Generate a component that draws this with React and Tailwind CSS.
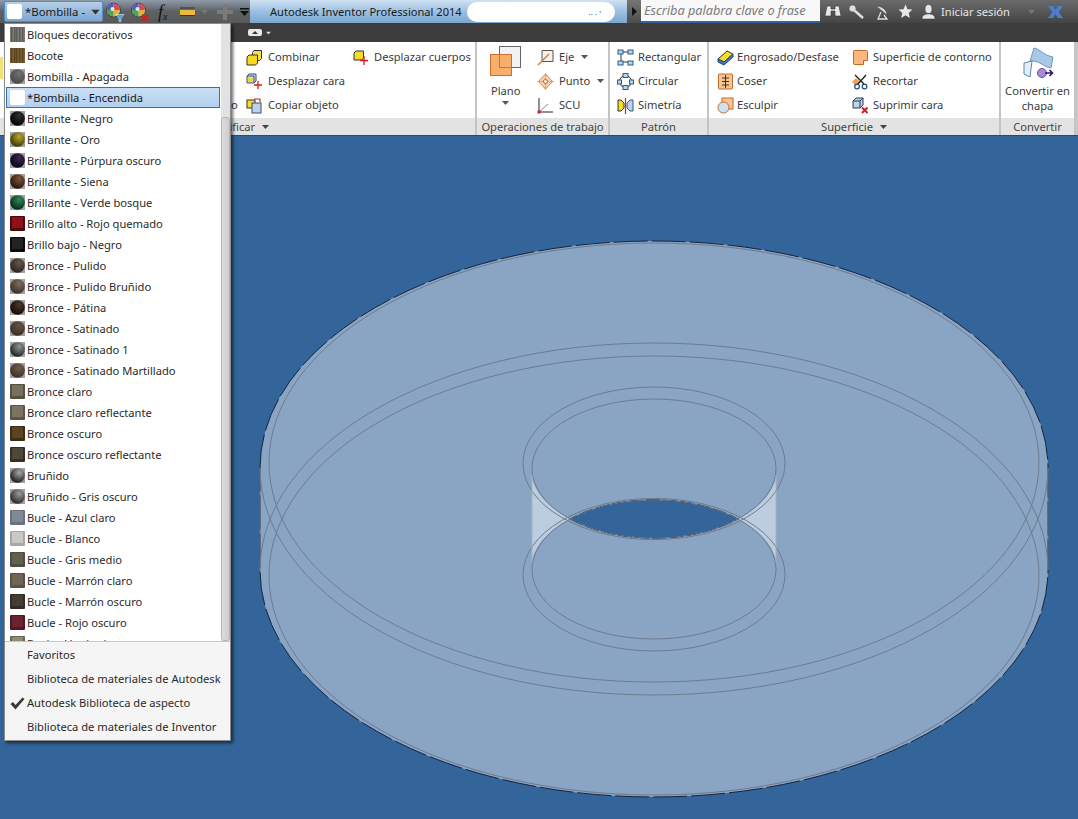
import React from "react";

const materials = [
  ["Bloques decorativos", "t", "#7d7a74", "#4a4845"],
  ["Bocote", "t", "#7a6034", "#43311a"],
  ["Bombilla - Apagada", "s", "#6f6f6f", "#4b4b4b"],
  ["*Bombilla - Encendida", "w", "#ffffff", "#ffffff"],
  ["Brillante - Negro", "s", "#303030", "#020202"],
  ["Brillante - Oro", "s", "#b8a82a", "#3f3706"],
  ["Brillante - Púrpura oscuro", "s", "#3a2a55", "#0a0414"],
  ["Brillante - Siena", "s", "#7d5340", "#2a150c"],
  ["Brillante - Verde bosque", "s", "#35875a", "#052c15"],
  ["Brillo alto - Rojo quemado", "b", "#8e1218", "#4c0a0d"],
  ["Brillo bajo - Negro", "b", "#232323", "#0c0c0c"],
  ["Bronce - Pulido", "s", "#64574c", "#2e2620"],
  ["Bronce - Pulido Bruñido", "s", "#7c6d60", "#3b322a"],
  ["Bronce - Pátina", "s", "#4a372b", "#130a06"],
  ["Bronce - Satinado", "s", "#665345", "#3a2e25"],
  ["Bronce - Satinado 1", "s", "#8f9898", "#1e2424"],
  ["Bronce - Satinado Martillado", "s", "#725e4e", "#3f3026"],
  ["Bronce claro", "b", "#77705f", "#57513f"],
  ["Bronce claro reflectante", "b", "#7b7462", "#5b5545"],
  ["Bronce oscuro", "b", "#5a4520", "#3d2e12"],
  ["Bronce oscuro reflectante", "b", "#50463a", "#362f24"],
  ["Bruñido", "s", "#a8a8a8", "#1e1e1e"],
  ["Bruñido - Gris oscuro", "s", "#9c9c9c", "#2b2b2b"],
  ["Bucle - Azul claro", "b", "#7f8998", "#6a7280"],
  ["Bucle - Blanco", "b", "#c9c9c3", "#a8a8a2"],
  ["Bucle - Gris medio", "b", "#62604f", "#4f4d42"],
  ["Bucle - Marrón claro", "b", "#716655", "#5a5043"],
  ["Bucle - Marrón oscuro", "b", "#443d34", "#312c25"],
  ["Bucle - Rojo oscuro", "b", "#6c2430", "#521822"],
  ["Bucle - Verde claro", "b", "#8d8d72", "#66664f"],
];

function Swatch({ kind, hi, lo, id }) {
  if (kind === "w") {
    return (
      <svg width="15" height="15" className="shrink-0">
        <rect x="0" y="0" width="15" height="15" rx="2" fill="#ffffff" />
      </svg>
    );
  }
  if (kind === "s") {
    return (
      <svg width="15" height="15" className="shrink-0">
        <defs>
          <radialGradient id={"m" + id} cx="0.62" cy="0.3" r="0.7">
            <stop offset="0" stopColor={hi} />
            <stop offset="1" stopColor={lo} />
          </radialGradient>
        </defs>
        <rect width="15" height="15" fill="#a0a0a0" />
        <circle cx="7.5" cy="7.5" r="7.300" fill={"url(#m" + id + ")"} />
      </svg>
    );
  }
  if (kind === "t") {
    return (
      <svg width="15" height="15" className="shrink-0">
        <rect width="15" height="15" fill={hi} />
        {[1, 4, 6, 9, 12].map((x) => (
          <rect key={x} x={x} y="0" width="1.400" height="15" fill={lo} opacity="0.6" />
        ))}
      </svg>
    );
  }
  return (
    <svg width="15" height="15" className="shrink-0">
      <rect width="15" height="15" rx="1" fill={lo} />
      <rect x="2" y="1" width="11" height="11" fill={hi} />
    </svg>
  );
}

const Caret = ({ className = "" }) => (
  <svg width="7" height="4" viewBox="0 0 7 4" className={"shrink-0 " + className}>
    <path d="M0 0h7L3.500 4z" fill="currentColor" />
  </svg>
);

function Wheel({ badge }) {
  return (
    <svg width="19" height="20" viewBox="0 0 19 20">
      <circle cx="7.500" cy="8" r="6.800" fill="#f4f4f4" stroke="#222" strokeWidth="0.8" />
      <path d="M7.500 8V1.500A6.500 6.500 0 0 1 14 8z" fill="#e0484f" />
      <path d="M7.500 8H14A6.500 6.500 0 0 1 7.500 14.500z" fill="#d9b73c" />
      <path d="M7.500 8v6.500A6.500 6.500 0 0 1 1 8z" fill="#4ca35a" />
      <path d="M7.500 8H1A6.500 6.500 0 0 1 7.500 1.500z" fill="#4a5fc8" />
      <circle cx="6.500" cy="7" r="2" fill="#e8e8e8" />
      {badge === "f" ? (
        <path d="M10 12.500h8l-3 3.500v3.500h-2V16z" fill="#35a6e8" stroke="#fff" strokeWidth="0.5" />
      ) : (
        <path d="M11 13l6 6m0-6l-6 6" stroke="#d81c1c" strokeWidth="2.200" />
      )}
    </svg>
  );
}

const Ico = ({ children, w = 17, h = 17 }) => (
  <svg width={w} height={h} viewBox={`0 0 ${w} ${h}`} className="shrink-0">
    {children}
  </svg>
);

const icons = {
  combinar: (
    <Ico>
      <path d="M8 1.500h7.500v8l-2 2H6.500v-8z" fill="#f6e23a" stroke="#333" />
      <path d="M3 6h8.500v8l-2 2H1v-8z" fill="#f8d820" stroke="#333" />
    </Ico>
  ),
  cara: (
    <Ico>
      <path d="M1 3l2-2h7v7l-2 2H1z" fill="#cfe0f2" stroke="#34506e" />
      <path d="M1 3h7v7" fill="none" stroke="#34506e" />
      <path d="M2 5h5v4H2z" fill="#f4d430" />
      <path d="M12 8v8M8 12h8" stroke="#d81c1c" strokeWidth="1.300" />
    </Ico>
  ),
  copiar: (
    <Ico>
      <rect x="1" y="3" width="8" height="8" fill="#f6dc28" stroke="#333" />
      <rect x="6" y="6" width="9" height="10" fill="#bcd3ec" stroke="#34506e" />
      <path d="M8 2h6v3" fill="none" stroke="#d81c1c" strokeWidth="1.200" />
    </Ico>
  ),
  cuerpos: (
    <Ico>
      <path d="M4 2h7.500v7l-2 2H2V4z" fill="#f6dc28" stroke="#333" />
      <path d="M12 7v9M8 11.500h8" stroke="#d81c1c" strokeWidth="1.300" />
    </Ico>
  ),
  eje: (
    <Ico>
      <path d="M5 1.500h11v11H5z" fill="#f2f2f2" stroke="#555" />
      <path d="M1 16L12 5" stroke="#d9833f" strokeWidth="1.600" />
    </Ico>
  ),
  punto: (
    <Ico>
      <path d="M8.500 1l7 7.500-7 7.500-7-7.500z" fill="#fbd3ad" stroke="#d9833f" />
      <path d="M0 8.500h17M8.500 0v17" stroke="#d9833f" strokeWidth="0.600" />
      <circle cx="8.500" cy="8.500" r="2" fill="#fff" stroke="#b5602a" />
    </Ico>
  ),
  scu: (
    <Ico>
      <path d="M2 1v14h14" fill="none" stroke="#222" />
      <path d="M2 15L11 7" stroke="#888" />
      <rect x="0.500" y="13.500" width="3" height="3" fill="#d81c1c" />
    </Ico>
  ),
  rect: (
    <Ico>
      <path d="M4 3h9M4 3v10M13 13H4" stroke="#333" />
      <rect x="1" y="1" width="5" height="4" fill="#bcd3ec" stroke="#2b5c90" />
      <rect x="11" y="1" width="5" height="4" fill="#bcd3ec" stroke="#2b5c90" />
      <rect x="1" y="12" width="5" height="4" fill="#bcd3ec" stroke="#2b5c90" />
      <rect x="11" y="12" width="5" height="4" fill="#bcd3ec" stroke="#2b5c90" />
    </Ico>
  ),
  circ: (
    <Ico>
      <circle cx="8.500" cy="8.500" r="6" fill="none" stroke="#333" />
      <rect x="6" y="0.500" width="5" height="4" fill="#bcd3ec" stroke="#2b5c90" />
      <rect x="0.500" y="7" width="4" height="4" fill="#bcd3ec" stroke="#2b5c90" />
      <rect x="12.500" y="7" width="4" height="4" fill="#bcd3ec" stroke="#2b5c90" />
      <rect x="6" y="12.500" width="5" height="4" fill="#bcd3ec" stroke="#2b5c90" />
    </Ico>
  ),
  sim: (
    <Ico>
      <path d="M1 3h3l3 3v5l-3 3H1z" fill="#f6dc28" stroke="#333" />
      <path d="M16 3h-3l-3 3v5l3 3h3z" fill="#bcd3ec" stroke="#2b5c90" />
      <path d="M8.500 1v16" stroke="#d81c1c" strokeWidth="1.200" />
    </Ico>
  ),
  engrosado: (
    <Ico>
      <path d="M1 10l9-8 6 3-9 8z" fill="#f6dc28" stroke="#333" />
      <path d="M1 10v3l6 3 9-8V5l-9 8z" fill="#3f78b8" stroke="#1f4a7a" />
    </Ico>
  ),
  coser: (
    <Ico>
      <rect x="1.500" y="1" width="14" height="15" rx="1" fill="#fbc592" stroke="#c06a28" />
      <path d="M8.500 2v13M5 5h7M5 8.500h7M5 12h7" stroke="#333" />
    </Ico>
  ),
  esculpir: (
    <Ico>
      <rect x="5" y="1" width="11" height="11" fill="#fbc592" stroke="#c06a28" />
      <circle cx="6.500" cy="10.500" r="5.500" fill="#cfe0f2" stroke="#c06a28" />
    </Ico>
  ),
  contorno: (
    <Ico>
      <path d="M1.500 2.500a1 1 0 0 1 1-1h12a1 1 0 0 1 1 1v9h-4v4h-9a1 1 0 0 1-1-1z" fill="#fbb77c" stroke="#c06a28" />
    </Ico>
  ),
  recortar: (
    <Ico>
      <path d="M0 9l4-4 4 4-4 4z" fill="#f0a050" />
      <path d="M3 2l9 9M14 2L6 11" stroke="#222" strokeWidth="1.400" />
      <circle cx="12.500" cy="13.500" r="2.300" fill="none" stroke="#1f4a7a" strokeWidth="1.200" />
      <circle cx="5" cy="13.500" r="2.300" fill="none" stroke="#1f4a7a" strokeWidth="1.200" />
    </Ico>
  ),
  suprimir: (
    <Ico>
      <path d="M1 4l3-3h7v7l-3 3H1z" fill="#bcd3ec" stroke="#2b3f55" />
      <path d="M1 4h7v7M8 4l3-3" fill="none" stroke="#2b3f55" />
      <path d="M10 10.500l5.500 5.500m0-5.500L10 16" stroke="#d81c1c" strokeWidth="2" />
    </Ico>
  ),
};

function Tool({ icon, label, caret, gap = "gap-[5px]" }) {
  return (
    <div className={"flex h-[24px] items-center " + gap}>
      {icons[icon]}
      <span className="whitespace-nowrap">{label}</span>
      {caret && <Caret className="ml-[2px] text-[#555]" />}
    </div>
  );
}

function Panel({ width, label, caret, children, className = "" }) {
  return (
    <div className={"flex h-full shrink-0 flex-col border-r-2 border-[#c4c4c4] " + width}>
      <div className={"flex h-[76px] pt-[3px] " + className}>{children}</div>
      <div className="flex h-[17px] items-center justify-center gap-[7px] bg-[#e3e3e3] text-[#444]">
        <span>{label}</span>
        {caret && <Caret className="text-[#444]" />}
      </div>
    </div>
  );
}

export default function App() {
  return (
    <div className="flex h-[819px] w-[1078px] flex-col overflow-hidden bg-[#33649a] font-['Noto_Sans','Liberation_Sans',sans-serif] text-[11.15px] leading-none text-[#3a3a3a]">
      {/* Title bar */}
      <div className="flex h-[23px] shrink-0 items-stretch">
        <div className="flex w-[250px] shrink-0 items-center bg-gradient-to-b from-[#8e9cab] via-[#5e6163] to-[#595959] pl-[4px]">
          <div className="flex h-[21px] w-[99px] shrink-0 items-center rounded-[2px] border border-[#4d8fcc] bg-gradient-to-b from-[#b5cfe9] to-[#7da6cf] pl-[2px] text-[11.4px] text-[#1a1a1a]">
            <span className="mr-[3px] h-[15px] w-[15px] shrink-0 rounded-[2px] bg-white" />
            <span className="whitespace-nowrap">*Bombilla -</span>
            <Caret className="ml-auto mr-[3px] scale-125 text-[#333]" />
          </div>
          <div className="ml-[3px] flex items-center gap-[6px] pt-[1px]">
            <Wheel badge="f" />
            <Wheel badge="x" />
          </div>
          <span className="ml-[8px] w-[19px] font-['Liberation_Serif',serif] text-[18px] italic text-[#111]">
            f<sub className="text-[10px]">x</sub>
          </span>
          <svg width="15" height="9" viewBox="0 0 15 9" className="ml-[3px] shrink-0">
            <rect x="0" y="3" width="15" height="5" fill="#e8b93a" />
            <path d="M0 1h15M0 8.500h15" stroke="#333" />
          </svg>
          <Caret className="ml-[6px] text-[#777]" />
          <svg width="18" height="18" viewBox="0 0 18 18" className="ml-[8px] shrink-0">
            <path d="M7 1h4v6h6v4h-6v6H7v-6H1V7h6z" fill="#7b7b7b" />
          </svg>
          <svg width="9" height="8" viewBox="0 0 9 8" className="ml-[6px] shrink-0">
            <path d="M0 0h9v1.500H0zM0 3h9L4.500 8z" fill="#111" />
          </svg>
        </div>
        <div className="flex w-[377px] shrink-0 items-center bg-gradient-to-b from-[#cfe2f3] via-[#9cc0e0] to-[#7ba7d0] pl-[20px] text-[11.1px] text-[#1a1a1a]">
          <span className="w-[197px] whitespace-nowrap">Autodesk Inventor Professional 2014</span>
          <div className="flex h-[20px] w-[148px] items-end justify-end rounded-full bg-white pr-[14px] pb-[3px] text-[8px] text-[#555]">
            <span>·· · '</span>
          </div>
        </div>
        <div className="flex w-[14px] shrink-0 items-center justify-center bg-gradient-to-b from-[#767676] to-[#4c4c4c]">
          <svg width="5" height="9" viewBox="0 0 5 9">
            <path d="M0 0l5 4.500L0 9z" fill="#111" />
          </svg>
        </div>
        <div className="flex h-[21px] w-[179px] shrink-0 items-center whitespace-nowrap bg-[#f8f8f8] pl-[3px] text-[12.7px] italic text-[#7c7c7c]">
          Escriba palabra clave o frase
        </div>
        <div className="flex flex-1 items-center gap-[7px] bg-gradient-to-b from-[#6b6b6b] to-[#444444] pl-[5px] text-[#e6e6e6]">
          <svg width="16" height="15" viewBox="0 0 16 15">
            <path d="M2 2h4v3h4V2h4l2 10h-6V7H6v5H0z" fill="#e8e8e8" stroke="#333" strokeWidth="0.6" />
          </svg>
          <svg width="17" height="15" viewBox="0 0 17 15">
            <circle cx="4.500" cy="4.500" r="3.500" fill="#e0e0e0" stroke="#444" strokeWidth="0.6" />
            <path d="M6.500 6.500L15 14" stroke="#e0e0e0" strokeWidth="2.400" />
          </svg>
          <svg width="17" height="16" viewBox="0 0 17 16" className="ml-[2px]">
            <path d="M2 2c6 0 11 4 11 9z" fill="#dcdcdc" stroke="#444" strokeWidth="0.6" />
            <path d="M7 8l-3 7h9l-3-4" fill="none" stroke="#dcdcdc" strokeWidth="1.300" />
          </svg>
          <svg width="15" height="15" viewBox="0 0 15 15">
            <path d="M7.500 0.500l2 4.700 5 .4-3.800 3.300 1.200 5L7.500 11.200 3.100 13.900l1.200-5L.5 5.600l5-.4z" fill="#e8e8e8" />
          </svg>
          <svg width="15" height="16" viewBox="0 0 15 16" className="ml-[1px]">
            <ellipse cx="7.500" cy="5" rx="3.500" ry="4.500" fill="#e6e6e6" stroke="#333" strokeWidth="0.5" />
            <path d="M1 15c0-4 3-5 6.500-5s6.500 1 6.500 5z" fill="#e6e6e6" stroke="#333" strokeWidth="0.5" />
          </svg>
          <span className="-ml-[2px] w-[80px] whitespace-nowrap text-[11.15px]">Iniciar sesión</span>
          <Caret className="text-[#777]" />
          <svg width="15" height="12" viewBox="0 0 15 12" className="ml-[6px] shrink-0">
            <path d="M0 0h5l2.500 4L10 0h5l-4.500 6 4.500 6h-5L7.500 8 5 12H0l4.500-6z" fill="#4a7fcf" />
          </svg>
          <svg width="3" height="12" viewBox="0 0 3 12" className="ml-[11px] shrink-0">
            <path d="M3 1C1 3 1 9 3 11" fill="none" stroke="#ccc" />
          </svg>
        </div>
      </div>

      {/* Dark tab bar */}
      <div className="flex h-[19px] shrink-0 items-center gap-[3px] bg-[#3c3c3c] pl-[248px]">
        <div className="flex h-[7px] w-[14px] items-center justify-center rounded-[2px] bg-[#e8e8e8]">
          <svg width="6" height="3" viewBox="0 0 6 3">
            <path d="M0 3l3-3 3 3z" fill="#333" />
          </svg>
        </div>
        <Caret className="scale-75 text-[#ddd]" />
      </div>

      {/* Ribbon */}
      <div className="flex h-[94px] shrink-0 border-b border-[#2a4a70] bg-white">
        <Panel width="w-[477px]" label="Modificar" caret>
          <div className="w-[4px] pt-[12px]">
            <div className="h-[22px] w-[3px] bg-[#f3e27a]" />
          </div>
          <div className="w-[227px]" />
          <div className="flex w-[15px] flex-col">
            <div className="h-[48px]" />
            <div className="flex h-[24px] items-center">o</div>
          </div>
          <div className="w-[106px]">
            <Tool icon="combinar" label="Combinar" />
            <Tool icon="cara" label="Desplazar cara" />
            <Tool icon="copiar" label="Copiar objeto" />
          </div>
          <Tool icon="cuerpos" label="Desplazar cuerpos" />
        </Panel>
        <Panel width="w-[133px]" label="Operaciones de trabajo" className="pl-[13px]">
          <div className="flex w-[46px] flex-col items-start">
            <svg width="31" height="30" viewBox="0 0 31 30" className="mt-[1px]">
              <rect x="9.500" y="0.500" width="21" height="21" fill="#f2f2f2" stroke="#666" />
              <rect x="0.500" y="8.500" width="21" height="21" fill="#f9ae6c" stroke="#c8702c" />
              <path d="M9.500 8.500v13h12" fill="none" stroke="#b57a4a" />
            </svg>
            <span className="mt-[9px] pl-[1px]">Plano</span>
            <Caret className="ml-[12px] mt-[5px] text-[#555]" />
          </div>
          <div className="pl-[1px]">
            <Tool icon="eje" label="Eje" caret />
            <Tool icon="punto" label="Punto" caret />
            <Tool icon="scu" label="SCU" />
          </div>
        </Panel>
        <Panel width="w-[99px]" label="Patrón" className="pl-[7px]">
          <div>
            <Tool icon="rect" label="Rectangular" gap="gap-[4px]" />
            <Tool icon="circ" label="Circular" gap="gap-[4px]" />
            <Tool icon="sim" label="Simetría" gap="gap-[4px]" />
          </div>
        </Panel>
        <Panel width="w-[292px]" label="Superficie" caret className="pl-[8px]">
          <div className="w-[135px]">
            <Tool icon="engrosado" label="Engrosado/Desfase" gap="gap-[3px]" />
            <Tool icon="coser" label="Coser" gap="gap-[3px]" />
            <Tool icon="esculpir" label="Esculpir" gap="gap-[3px]" />
          </div>
          <div>
            <Tool icon="contorno" label="Superficie de contorno" gap="gap-[4px]" />
            <Tool icon="recortar" label="Recortar" gap="gap-[4px]" />
            <Tool icon="suprimir" label="Suprimir cara" gap="gap-[4px]" />
          </div>
        </Panel>
        <Panel width="w-[75px]" label="Convertir" className="flex-col items-center">
          <svg width="32" height="32" viewBox="0 0 32 32" className="mt-[2px]">
            <path d="M8 14L12 1c6 1 9 7 19 9l-2 11c-7-1-10-6-17-7z" fill="#a9c8e8" stroke="#6f98c0" />
            <path d="M2 16l8-2-2 16-6-3z" fill="#e4eef7" stroke="#5b85ae" />
            <circle cx="20" cy="26" r="4.500" fill="#a78ad8" stroke="#6a4fa8" />
            <path d="M23 26h7m-2.500-3l3 3-3 3" fill="none" stroke="#2b1a6a" strokeWidth="1.600" />
          </svg>
          <span className="mt-[4px] whitespace-nowrap leading-[15px]">Convertir en</span>
          <span className="leading-[15px]">chapa</span>
        </Panel>
        <div className="flex-1 bg-[#c8c8c8]" />
      </div>

      {/* Viewport */}
      <div className="relative flex-1 overflow-hidden">
        <svg width="1078" height="683" viewBox="0 136 1078 683" className="block">
          <ellipse cx="654" cy="468" rx="394" ry="227" fill="#8aa4c3" />
          <ellipse cx="654" cy="570" rx="394" ry="227" fill="#8aa4c3" />
          <rect x="260" y="468" width="788" height="102" fill="#8aa4c3" />
          {/* silhouette */}
          <path
            d="M260 468A394 227 0 0 1 1048 468V570A394 227 0 0 1 260 570Z"
            fill="none"
            stroke="#14233c"
            strokeWidth="1"
            strokeDasharray="34 4"
          />
          <g fill="none" stroke="#6d7b8e" strokeWidth="1">
            <ellipse cx="654" cy="462.500" rx="385" ry="219.500" />
            <ellipse cx="654" cy="575.500" rx="385" ry="219.500" />
            <path d="M654 695A394 227 0 0 1 260 468M654 695A394 227 0 0 0 1048 468" />
            <path d="M654 343A394 227 0 0 0 260 570M654 343A394 227 0 0 1 1048 570" />
            <path d="M260 468V570M1048 468V570" />
          </g>
          {/* through-hole walls */}
          <path d="M532 478 A122 69.500 0 0 0 570 519 A122 69.500 0 0 0 532 560Z" fill="#bccde0" />
          <path d="M776 478 A122 69.500 0 0 1 738 519 A122 69.500 0 0 1 776 560Z" fill="#bccde0" />
          <path
            d="M570 519A122 69.500 0 0 0 738 519A122 69.500 0 0 0 570 519Z"
            fill="#33649a"
            stroke="#07142b"
            strokeWidth="1"
            strokeDasharray="14 3"
          />
          <g fill="none" stroke="#6d7b8e" strokeWidth="1">
            <ellipse cx="654" cy="463.300" rx="131" ry="76.300" />
            <ellipse cx="654" cy="574.700" rx="131" ry="76.300" />
            <ellipse cx="654" cy="468.500" rx="122" ry="69.500" />
            <ellipse cx="654" cy="569.500" rx="122" ry="69.500" />
          </g>
          <path d="M532 475V563M776 475V563" stroke="#a3b3c6" strokeWidth="1" />
        </svg>
      </div>

      {/* Material dropdown */}
      <div className="absolute left-[4px] top-[23px] flex h-[718px] w-[227px] flex-col border border-[#8c8c8c] bg-white text-[#2a2a2a] shadow-[2px_2px_3px_rgba(0,0,0,0.6)]">
        <div className="flex h-[617px] shrink-0 overflow-hidden">
          <div className="flex-1 overflow-hidden">
            {materials.map(([name, kind, hi, lo], i) => (
              <div
                key={name}
                className={
                  name.startsWith("*")
                    ? "ml-[1px] mr-[1px] flex h-[21px] items-center gap-[2px] border border-[#3572ad] bg-gradient-to-b from-[#c9dff5] to-[#b2d0ef] pl-[3px] text-[#1a1a1a]"
                    : "flex h-[21px] items-center gap-[2px] pl-[5px]"
                }
              >
                <Swatch kind={kind} hi={hi} lo={lo} id={i} />
                <span className="whitespace-nowrap">{name}</span>
              </div>
            ))}
          </div>
          <div className="flex w-[9px] shrink-0 flex-col bg-[#e2e2e2]">
            <div className="h-[93px]" />
            <div className="flex-1 rounded-[3px] border border-[#b5b5b5] bg-gradient-to-r from-[#dcdcdc] to-[#cfcfcf]" />
          </div>
        </div>
        <div className="flex flex-1 flex-col border-t border-[#c8c8c8] bg-[#f5f5f5] pt-[1px]">
          {[
            "Favoritos",
            "Biblioteca de materiales de Autodesk",
            "Autodesk Biblioteca de aspecto",
            "Biblioteca de materiales de Inventor",
          ].map((t, i) => (
            <div key={t} className="flex h-[24px] items-center pl-[22px]">
              {i === 2 && (
                <svg width="15" height="13" viewBox="0 0 15 13" className="-ml-[17px] mr-[2px] shrink-0">
                  <path d="M0.500 7l2.500-2 2.500 3L12.500 0.500 14.500 2 5.500 12.500z" fill="#3a3a3a" />
                </svg>
              )}
              <span className="whitespace-nowrap">{t}</span>
            </div>
          ))}
        </div>
      </div>
    </div>
  );
}
